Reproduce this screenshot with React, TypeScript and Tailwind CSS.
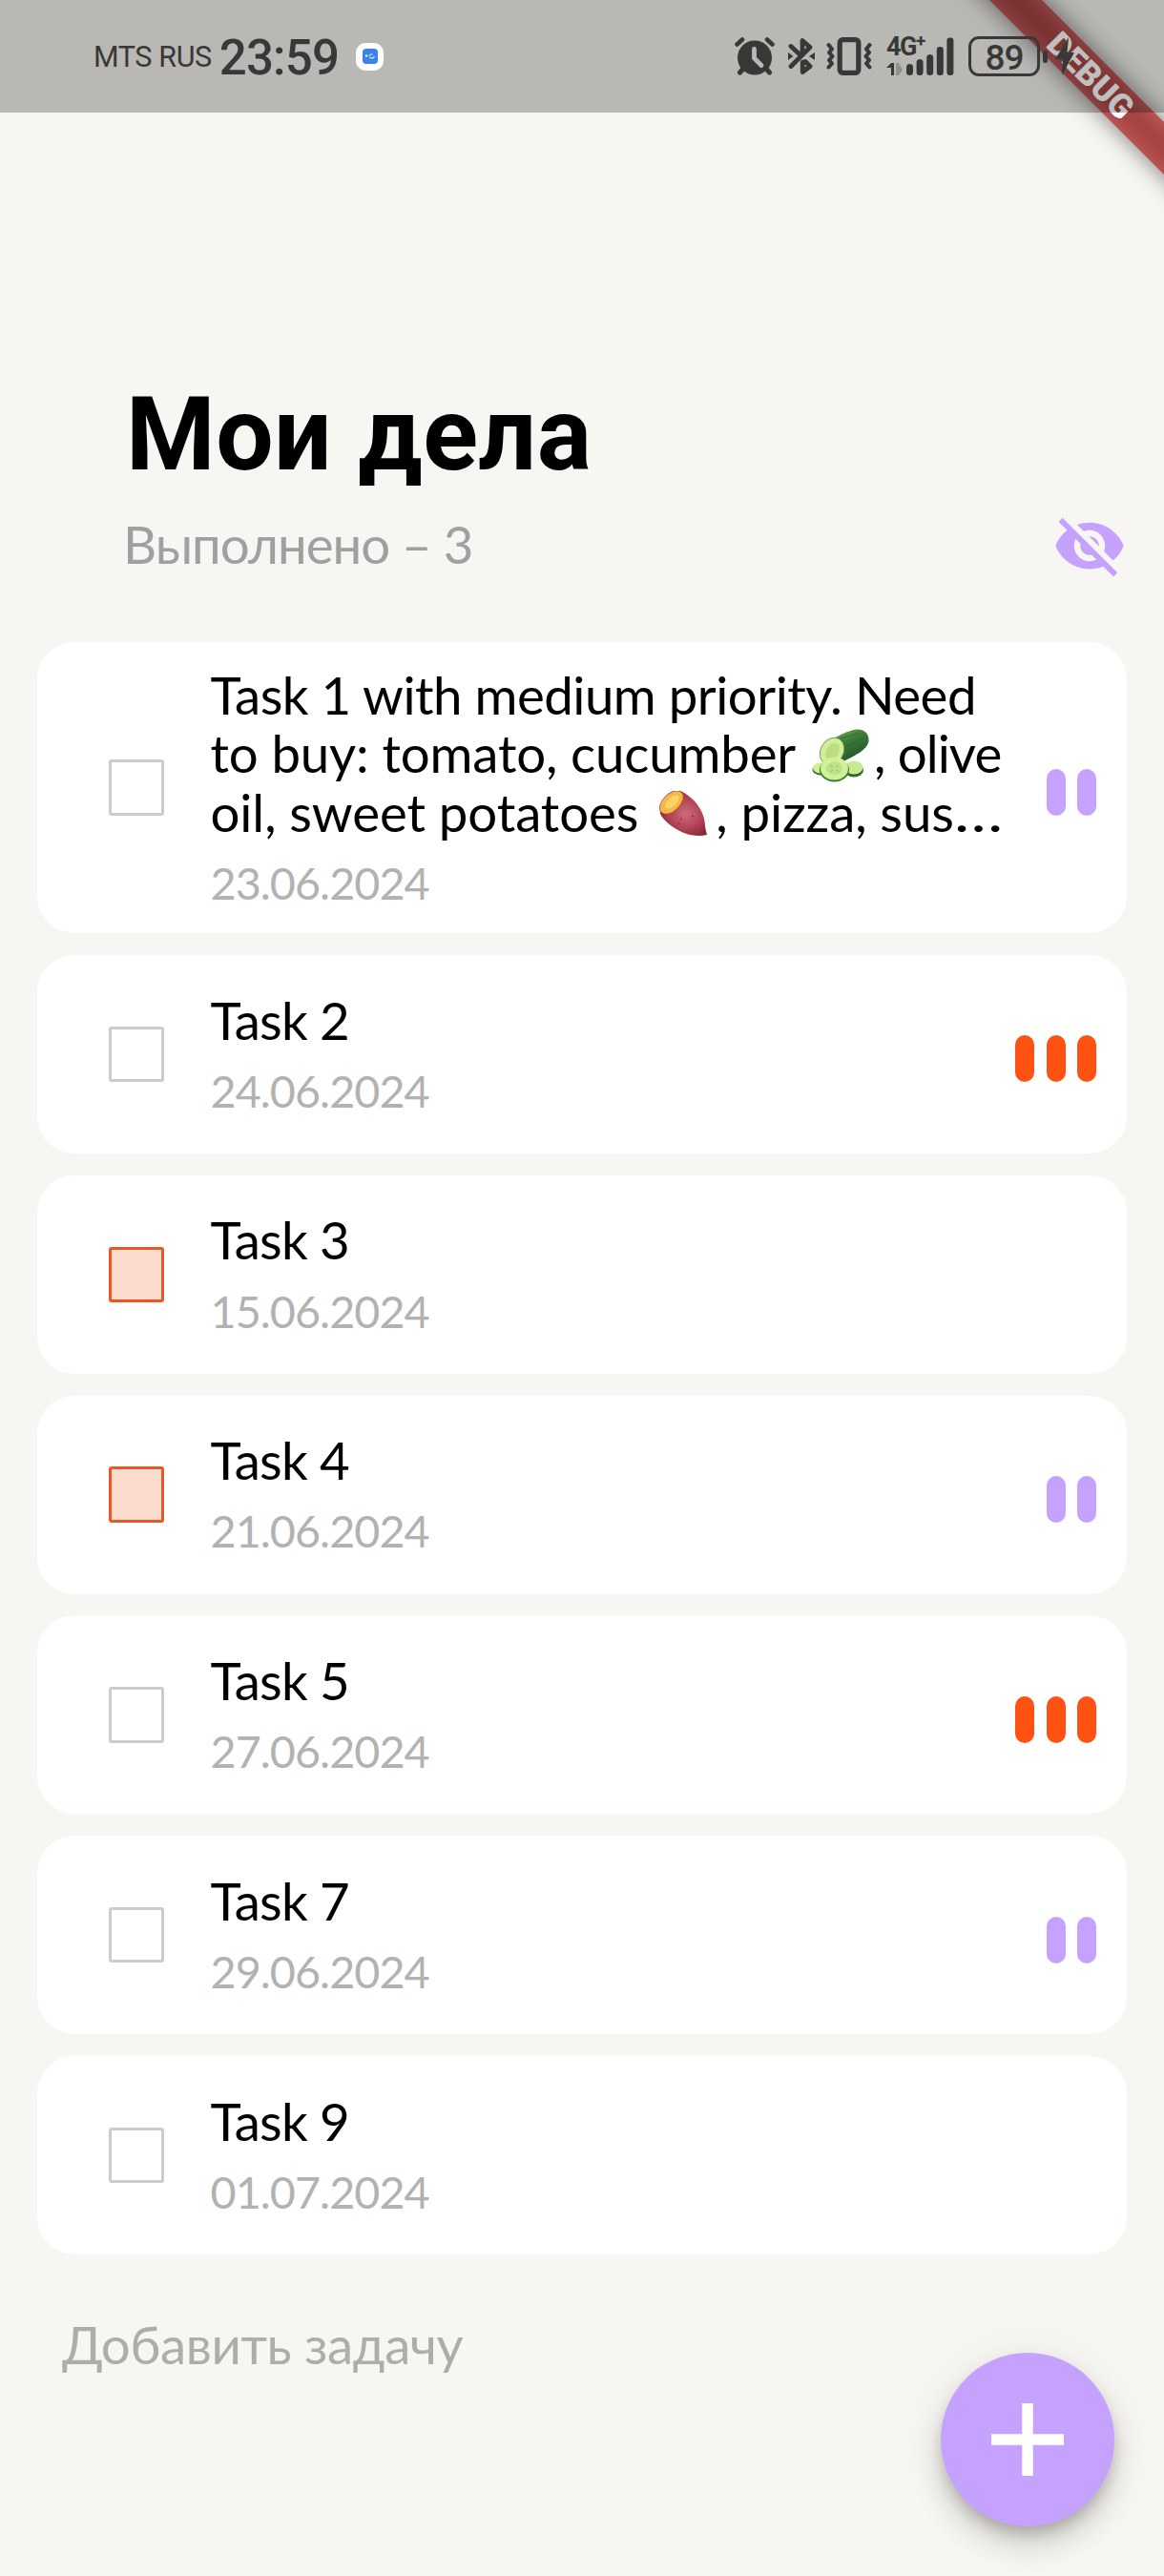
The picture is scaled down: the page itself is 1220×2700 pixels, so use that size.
import type { ReactNode } from 'react';

type Priority = 'none' | 'medium' | 'high';
type Task = { id: string; lines: ReactNode[]; date: string; done?: boolean; priority: Priority; tall?: boolean };

function Cucumber() {
  return (
    <svg role="img" aria-label="🥒" viewBox="0 0 60 56" className="mt-[5px] ml-[17px] mr-[5px] h-[56px] w-[60px]">
      <defs>
        <linearGradient id="peel" x1="0.2" y1="0" x2="0.8" y2="1">
          <stop offset="0" stopColor="#79ad5c" />
          <stop offset="0.4" stopColor="#3d7a3a" />
          <stop offset="1" stopColor="#1d4f24" />
        </linearGradient>
      </defs>
      <path d="M10 23C16 12 34 3 45 0.800C54 -0.500 60 4 59.500 13C58 22 45 28 33 34L12 36Z" fill="url(#peel)" />
      <path d="M30 10L50 4M36 18L56 9M37 26L56 15" stroke="#2a6334" strokeWidth="1.200" fill="none" opacity="0.6" />
      <ellipse cx="21" cy="23.500" rx="12" ry="15" transform="rotate(30 21 23.500)" fill="#d2ec9c" stroke="#5b9c42" strokeWidth="0.8" />
      <ellipse cx="21.500" cy="23.500" rx="6.500" ry="9.500" transform="rotate(30 21.500 23.500)" fill="#b9df7f" />
      <ellipse cx="9" cy="42.500" rx="8.500" ry="6" fill="#2f6d30" />
      <ellipse cx="9" cy="41" rx="8" ry="5.500" fill="#d0ee96" />
      <ellipse cx="44" cy="43" rx="10" ry="7.500" fill="#2d6a2c" />
      <ellipse cx="44" cy="40.500" rx="9.500" ry="7" fill="#c9ea8e" />
      <ellipse cx="23.500" cy="43" rx="15.500" ry="12.500" fill="#3b7d33" />
      <ellipse cx="23.500" cy="41.500" rx="14.500" ry="12" fill="#d2f09a" />
      <ellipse cx="23.500" cy="41.500" rx="8.500" ry="7" fill="#bde388" />
      <path d="M19 38l3 2M28 38l-3 2M19 45l3-2M28 45l-3-2" stroke="#94c563" strokeWidth="1" />
    </svg>
  );
}

function SweetPotato() {
  return (
    <svg role="img" aria-label="🍠" viewBox="0 0 50 47" className="mt-[8px] ml-[22px] mr-[9px] h-[47px] w-[50px]">
      <defs>
        <radialGradient id="skin" cx="0.55" cy="0.5" r="0.6">
          <stop offset="0" stopColor="#cd6c78" />
          <stop offset="0.6" stopColor="#b04154" />
          <stop offset="1" stopColor="#842538" />
        </radialGradient>
      </defs>
      <path d="M24 0.800C37 8 46 20 47.500 32Q48 40 50 46Q40 48 30 45.500C17 41 5 33 0.500 23Z" fill="url(#skin)" />
      <ellipse cx="13" cy="12" rx="9.500" ry="15.500" transform="rotate(46 13 12)" fill="#b5453c" />
      <ellipse cx="12.800" cy="12" rx="8.600" ry="14.500" transform="rotate(46 12.800 12)" fill="#f3b945" />
      <ellipse cx="13.500" cy="11.500" rx="4.500" ry="9" transform="rotate(46 13.500 11.500)" fill="#fbd26a" />
      <path d="M22 29l2 1M34 26l2 1M20 34l2 1M38 36l1 1" stroke="#8d2c40" strokeWidth="1.200" />
    </svg>
  );
}

const tasks: Task[] = [
  {
    id: 't1',
    tall: true,
    priority: 'medium',
    date: '23.06.2024',
    lines: [
      <span key="a" className="tracking-[-0.5px]">Task 1 with medium priority. Need</span>,
      <span key="b" className="flex tracking-[-0.15px]">
        <span>to buy: tomato, cucumber</span>
        <Cucumber />
        <span className="tracking-[-0.9px]">, olive</span>
      </span>,
      <span key="c" className="flex tracking-[-0.1px]">
        <span>oil, sweet potatoes</span>
        <SweetPotato />
        <span>, pizza, sus</span>
        <span className="origin-left scale-x-[1.25]">…</span>
      </span>,
    ],
  },
  { id: 't2', lines: ['Task 2'], date: '24.06.2024', priority: 'high' },
  { id: 't3', lines: ['Task 3'], date: '15.06.2024', priority: 'none', done: true },
  { id: 't4', lines: ['Task 4'], date: '21.06.2024', priority: 'medium', done: true },
  { id: 't5', lines: ['Task 5'], date: '27.06.2024', priority: 'high' },
  { id: 't7', lines: ['Task 7'], date: '29.06.2024', priority: 'medium' },
  { id: 't9', lines: ['Task 9'], date: '01.07.2024', priority: 'none' },
];

function PriorityBars({ priority }: { priority: Priority }) {
  if (priority === 'none') return null;
  const count = priority === 'high' ? 3 : 2;
  return (
    <div className="mt-[10px] flex gap-[12.5px]">
      {Array.from({ length: count }, (_, i) => (
        <span
          key={i}
          className={`h-[49px] w-[20px] rounded-full ${priority === 'high' ? 'bg-[#fe5213]' : 'bg-[#c6a2ff]'}`}
        />
      ))}
    </div>
  );
}

function TaskCard({ task }: { task: Task }) {
  return (
    <li className={`flex items-center rounded-[39px] bg-white pr-[32px] pl-[74.5px] ${task.tall ? 'h-[305.5px]' : 'h-[208px]'}`}>
      <span
        className={`size-[58.5px] shrink-0 rounded-[3px] border-3 ${
          task.done ? 'border-[#ec5825] bg-[#fddcd0]' : 'border-[#cccccc]'
        }`}
      />
      <div className="ml-[48.5px] flex flex-1 flex-col gap-[13.7px] pt-[2px]">
        <div className="text-[54.6px] leading-[61.5px] tracking-[-0.8px] whitespace-nowrap text-black">
          {task.lines.map((line, i) => (
            <div key={i} className="h-[61.5px]">{line}</div>
          ))}
        </div>
        <div className="text-[46.7px] leading-[59.4px] tracking-[-0.95px] text-[#b2b2b2]">{task.date}</div>
      </div>
      <PriorityBars priority={task.priority} />
    </li>
  );
}

function StatusIcons() {
  return (
    <div className="flex h-full items-center text-[#383836]">
      <svg viewBox="0 0 42 40" className="h-[40px] w-[42px]" fill="none" stroke="currentColor" strokeLinecap="round">
        <circle cx="21" cy="21.500" r="18" fill="currentColor" stroke="none" />
        <path d="M2.500 7.500L8 2.500M39.500 7.500L34 2.500" strokeWidth="4.500" />
        <path d="M9 33L5.500 37M33 33L36.500 37" strokeWidth="5" />
        <path d="M20.500 12.500V22L28 29.500" stroke="#b9b8b4" strokeWidth="4.800" strokeLinejoin="round" />
      </svg>
      <svg viewBox="0 0 28 40" className="ml-[14px] h-[40px] w-[28px]" fill="none" stroke="currentColor">
        <path
          d="M3 9.500L11.500 17.500M3 30.500L23 10.500L15 3.500V17M15.200 26V36.500L23 30.500L18 25.500Z"
          strokeWidth="4.800"
          strokeLinejoin="round"
          strokeLinecap="round"
        />
        <path d="M0 16l5.500 4l-5.500 4zM28 16l-6 4l6 4z" fill="currentColor" stroke="none" />
      </svg>
      <svg viewBox="0 0 48 40" className="ml-[12px] h-[40px] w-[48px]" fill="none" stroke="currentColor">
        <rect x="14.200" y="2.700" width="19.600" height="34.600" rx="3" strokeWidth="5.200" />
        <path
          d="M2.500 8l3.500 4.500l-3 3.500l3.500 4l-3.500 4l3 3.500l-3.500 4M45.500 8l-3.500 4.500l3 3.500l-3.500 4l3.500 4l-3 3.500l3.500 4"
          strokeWidth="4"
          strokeLinejoin="round"
          strokeLinecap="round"
        />
      </svg>
      <div className="ml-[15px] flex h-[40px] w-[71px] flex-col">
        <div className="flex h-[20px] font-[Roboto] text-[27px] leading-[20px] font-bold">
          <span className="tracking-[-1.5px]">4G</span>
          <span className="-mt-[6px] text-[19px]">+</span>
        </div>
        <svg viewBox="0 0 71 40" className="-mt-[20px] h-[40px] w-[71px] shrink-0" fill="currentColor">
          <path d="M5 27h3v13H5v-8H0z" />
          <path d="M10 27h3l4 7l-4 6h-3z" opacity="0.3" />
          <rect x="21" y="28" width="7" height="12" rx="3.500" />
          <rect x="31.600" y="23" width="7" height="17" rx="3.500" />
          <rect x="42.200" y="18" width="7" height="22" rx="3.500" />
          <rect x="52.800" y="10" width="7" height="30" rx="3" />
          <rect x="63.400" y="0.500" width="7" height="39.500" rx="3" />
        </svg>
      </div>
      <div className="ml-[15px] flex h-[42px] w-[75px] items-center justify-center rounded-[11px] border-3 border-current pt-[3px] font-[Roboto] text-[37px] leading-none font-medium tracking-[-1px]">
        89
      </div>
      <span className="ml-[3px] h-[13px] w-[5px] rounded-full bg-current" />
      <svg viewBox="0 0 20 40" className="ml-[8px] h-[40px] w-[20px]" fill="currentColor">
        <path d="M14 0L0 23H8L7 40L20 16H12.500Z" />
      </svg>
    </div>
  );
}

function DebugBanner() {
  return (
    <div className="pointer-events-none absolute top-0 right-0 size-[260px] overflow-hidden">
      <div className="absolute top-[58px] left-[-18.5px] h-[39px] w-[400px] rotate-45 bg-black/50 blur-[13px]" />
      <div className="absolute top-[58px] left-[-18.5px] flex h-[39px] w-[400px] rotate-45 items-center justify-center bg-[#b71c1c]/63 pt-[1px] pl-[4px]">
        <span className="font-[Roboto] text-[35px] leading-none font-black text-white">DEBUG</span>
      </div>
    </div>
  );
}

export default function App() {
  return (
    <div className="relative flex h-[2700px] w-[1220px] flex-col overflow-hidden bg-[#f7f6f2] font-[Lato,sans-serif]">
      <DebugBanner />
      <header className="relative flex h-[118px] shrink-0 items-center justify-between bg-black/25 pr-[94px] pl-[98px] text-[#383836]">
        <div className="flex h-full items-center font-[Roboto]">
          <span className="pt-[2px] text-[30.5px] leading-[40px] tracking-[-0.4px]">MTS RUS</span>
          <span className="ml-[8px] pt-[3px] text-[51px] leading-[60px] font-medium tracking-[-0.8px]">23:59</span>
          <span className="ml-[18px] flex size-[29px] items-center justify-center rounded-[10px] bg-white">
            <svg viewBox="0 0 16 16" className="size-[16px] rounded-[4px] bg-[#3b82ee]" fill="none" stroke="white">
              <path d="M3 7.500h2" strokeWidth="2" />
              <path d="M6.500 7.500l2-1.500h2M7 8.500l2 1.500h2l1.500-2" />
            </svg>
          </span>
        </div>
        <StatusIcons />
      </header>

      <h1 className="mt-[284px] ml-[132px] font-[Roboto] text-[107px] leading-[107px] font-bold tracking-[0.5px] text-black">
        Мои дела
      </h1>
      <div className="mt-[24px] mr-[39px] ml-[129px] flex h-[78px] items-center justify-between">
        <span className="pb-[5px] text-[54.6px] leading-[66px] tracking-[-1px] text-[#a0a09e]">Выполнено – 3</span>
        <svg viewBox="0 0 24 24" className="size-[78px]" fill="#c6a2ff">
          <path d="M12 7c2.760 0 5 2.240 5 5 0 .650-.130 1.260-.360 1.830l2.920 2.920c1.510-1.260 2.700-2.890 3.430-4.750-1.730-4.390-6-7.500-11-7.500-1.400 0-2.740.250-3.980.700l2.160 2.160C10.740 7.130 11.350 7 12 7zM2 4.270l2.280 2.280.460.460C3.080 8.300 1.780 10.020 1 12c1.730 4.390 6 7.500 11 7.500 1.550 0 3.030-.300 4.380-.840l.420.420L19.730 22 21 20.730 3.270 3 2 4.270zM7.530 9.800l1.550 1.550c-.050.210-.080.430-.080.650 0 1.660 1.340 3 3 3 .220 0 .440-.030.650-.080l1.550 1.550c-.670.330-1.410.530-2.200.530-2.760 0-5-2.240-5-5 0-.790.200-1.530.530-2.200zm4.310-.780l3.150 3.150.020-.160c0-1.660-1.340-3-3-3l-.170.010z" />
        </svg>
      </div>

      <ul className="mt-[61.7px] mr-[39px] ml-[39px] flex flex-col gap-[22.8px]">
        {tasks.map((task) => (
          <TaskCard key={task.id} task={task} />
        ))}
      </ul>
      <div className="mt-[61px] ml-[65px] text-[54.6px] leading-[66px] tracking-[-0.4px] text-[#adada9]">Добавить задачу</div>

      <button
        aria-label="Добавить"
        className="absolute right-[52px] bottom-[52px] flex size-[182px] items-center justify-center rounded-full bg-[#c6a2ff] shadow-[0_10px_16px_-3px_rgba(0,0,0,0.2),0_20px_33px_rgba(0,0,0,0.14),0_3px_58px_rgba(0,0,0,0.06)]"
      >
        <svg viewBox="0 0 76 76" className="size-[76px]" stroke="white" strokeWidth="11.500">
          <path d="M38 0V76M0 38H76" />
        </svg>
      </button>
    </div>
  );
}
